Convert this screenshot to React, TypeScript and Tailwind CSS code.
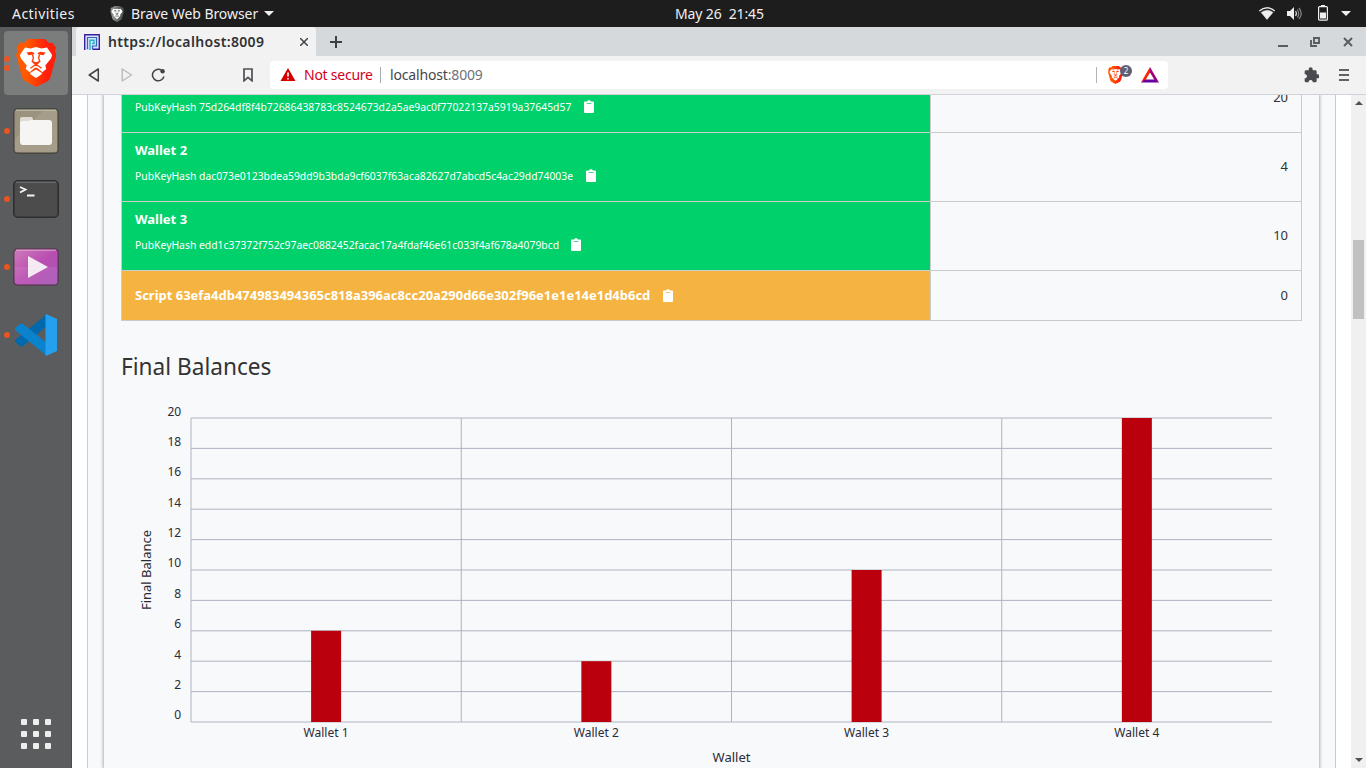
import React from "react";

const rows = [
  { name: "", hash: "75d264df8f4b72686438783c8524673d2a5ae9ac0f77022137a5919a37645d57", value: 20 },
  { name: "Wallet 2", hash: "dac073e0123bdea59dd9b3bda9cf6037f63aca82627d7abcd5c4ac29dd74003e", value: 4 },
  { name: "Wallet 3", hash: "edd1c37372f752c97aec0882452facac17a4fdaf46e61c033f4af678a4079bcd", value: 10 },
];

const bars = [6, 4, 10, 20];
const ticks = [0, 2, 4, 6, 8, 10, 12, 14, 16, 18, 20];

function Clipboard() {
  return (
    <svg width="10" height="14" viewBox="0 0 10 14" className="shrink-0">
      <path fill="#fff" fillRule="evenodd" d="M1 1.6h2.2C3.4.7 4.1.2 5 .2s1.600.5 1.800 1.400H9a1 1 0 0 1 1 1V12a1 1 0 0 1-1 1H1a1 1 0 0 1-1-1V2.600a1 1 0 0 1 1-1zM2.600 2.900v.9h4.800v-.9z" />
    </svg>
  );
}

function Lion({ id, grey }: { id: string; grey?: boolean }) {
  const a = grey ? "#8a8d8e" : "#ff5a00";
  const b = grey ? "#55585a" : "#ff1f0a";
  const line = grey ? "#55585a" : "#ff3a06";
  return (
    <svg viewBox="0 0 40 48" className="h-full w-full">
      <defs>
        <linearGradient id={id} x1="0" x2="1">
          <stop offset="0.25" stopColor={a} />
          <stop offset="0.75" stopColor={b} />
        </linearGradient>
      </defs>
      <path fill={`url(#${id})`} d="M12 0h17l4 4 3.500-.3 3.500 5-1 3.500 1.500 4-6 22q-.7 2.500-3 4L20 48 9 42q-2.300-1.500-3-4L0 16l1.500-4-1-3.500L4 3.500 8 4z" />
      <path fill="#fff" d="M9 8.500 14.500 9.500l5.500-1.500 5.500 1.500 5.500-1 5.200 7.500-1.200 3.500-5.700 7 1 3.500-4 3.200-4.500-4-1.800-.7-1.800.7-4.500 4-4-3.200 1-3.500-5.700-7L3.800 16zM20 30.500l6.300 3.700-2 2L20 39l-4.300-2.800-2-2z" />
      <path fill={line} d="m10.500 13.500 5-.7 3 1.200-.7 1.200-3.300.8-2 .2zM29.500 13.500l-5-.7-3 1.200.7 1.200 3.300.8 2 .2z" />
      <path fill="none" stroke={line} strokeWidth="1.300" d="m16.500 15.500.9 3.500-1.200 3.500 3.800 2.800 3.800-2.800-1.200-3.500.9-3.500M20 25.300l-5.500 4M20 25.300l5.500 4" />
      <path fill={line} d="m16.500 22 3.500 1.200 3.500-1.200-1 2.500-2.500 1.700-2.500-1.700z" />
    </svg>
  );
}

function TopBar() {
  return (
    <header className="flex h-[27px] shrink-0 items-center bg-[#1d1d1d] text-[14px] leading-[27px] text-[#efefef]">
      <span className="ml-3 w-[98px] tracking-[0.45px]">Activities</span>
      <span className="h-4 w-[14px]"><Lion id="menu-lion" grey /></span>
      <span className="ml-[7px] w-[129px] whitespace-nowrap tracking-[-0.06px]">Brave Web Browser</span>
      <svg width="10" height="6" className="ml-1"><path d="M0 0h10L5 5z" fill="#efefef" /></svg>
      <span className="ml-[401px] whitespace-pre tracking-[-0.12px]">May 26  21:45</span>
      <div className="mr-[15px] ml-auto flex items-center">
        <svg width="16" height="13" viewBox="0 0 16 13" className="mr-px">
          <path fill="#8b8b8b" d="M0 3.500Q8-3 16 3.500L8 13z" />
          <path fill="#efefef" d="M0 3.500Q8-3 16 3.500l-1 1.200Q8-.8 1 4.700zM2.200 5.500Q8 1.500 13.800 5.500L8 12.500z" />
          <path fill="none" stroke="#1d1d1d" strokeWidth="1.200" d="M1 4.900Q8-.5 15 4.900" />
        </svg>
        <svg width="15" height="13" viewBox="0 0 15 13" className="ml-[11px]">
          <path fill="#efefef" d="M0 4h3l4-4v13l-4-4H0z" />
          <path fill="none" stroke="#d5d5d5" strokeWidth="1.200" d="M8.500 4q2 2.500 0 5" />
          <path fill="none" stroke="#858585" strokeWidth="1.200" d="M10.300 2.500q3 4 0 8M12 1q4.500 5.500 0 11" />
        </svg>
        <svg width="10" height="16" viewBox="0 0 10 16" className="mb-[2px] ml-4">
          <path fill="#efefef" d="M3 0h4v2H3z" />
          <rect x=".6" y="1.600" width="8.800" height="13.600" rx="1" fill="none" stroke="#efefef" strokeWidth="1.200" />
          <path fill="#efefef" d="M2 7.500h6v6H2z" />
        </svg>
        <svg width="10" height="6" className="ml-[13px]"><path d="M0 0h10L5 5z" fill="#efefef" /></svg>
      </div>
    </header>
  );
}

function Dot() {
  return <i className="h-[6px] w-[6px] rounded-full bg-[#e95420]" />;
}

function DockItem({ children }: { children: React.ReactNode }) {
  return (
    <div className="flex h-[68px] items-center">
      <span className="ml-1 flex w-[9px]"><Dot /></span>
      {children}
    </div>
  );
}

function Dock() {
  return (
    <aside className="flex w-[72px] shrink-0 flex-col border-r border-[#4a4b4c] bg-[#5b5c5d]">
      <div className="mt-1 ml-1 flex h-16 w-16 shrink-0 items-center rounded-[4px] bg-[#7b7c7c]">
        <span className="flex w-3 flex-col gap-[3px]"><Dot /><Dot /></span>
        <span className="h-12 w-10"><Lion id="dock-lion" /></span>
      </div>
      <div className="mt-[2px]">
        <DockItem>
          <svg width="46" height="46" viewBox="0 0 46 46">
            <rect x=".8" y=".8" width="44.400" height="44.400" rx="4" fill="#9b937e" stroke="#494840" strokeWidth="1.500" />
            <path d="M2 31 31 2h11q2 0 2 2v38q0 2-2 2H4q-2 0-2-2z" fill="#a59d89" />
            <path d="M3 2.200h40" stroke="#c8c3b5" />
            <path d="M7 17v-6q0-2 2-2h9q2 0 2 3z" fill="#dedbd0" />
            <path d="M7 16q0-3 3-3h5l3-1h18q3 0 3 3v19q0 3-3 3H10q-3 0-3-3z" fill="#f6f5f3" />
          </svg>
        </DockItem>
        <DockItem>
          <svg width="46" height="38" viewBox="0 0 46 38">
            <rect x=".8" y=".8" width="44.400" height="36.400" rx="4" fill="#4c4c4c" stroke="#2e2e2e" strokeWidth="1.600" />
            <path d="M3 2.200h40" stroke="#777" />
            <path d="m7 7 5.500 2.500L7 12.500M14 15.500h7.500" fill="none" stroke="#f5f5f5" strokeWidth="1.800" />
          </svg>
        </DockItem>
        <DockItem>
          <svg width="46" height="38" viewBox="0 0 46 38">
            <defs>
              <linearGradient id="video" x2="1" y2="1"><stop stopColor="#cf7cb9" /><stop offset=".5" stopColor="#b94eb2" /><stop offset="1" stopColor="#a255b4" /></linearGradient>
            </defs>
            <rect x=".8" y=".8" width="44.400" height="36.400" rx="4" fill="url(#video)" stroke="#55384f" strokeWidth="1.300" />
            <path d="M2 19h42v17H2z" fill="#fff" opacity=".08" />
            <path d="M3 2.200h40" stroke="#dfa8d2" />
            <path d="M15 8v22l20-11z" fill="#f5e9f4" />
          </svg>
        </DockItem>
        <DockItem>
          <svg width="44" height="44" viewBox="0 0 44 44" className="ml-px">
            <path fill="#0069ad" d="m1 29 5 4q1.500 1 3 0L33 13V1L1 27z" />
            <path fill="#0a82cc" d="M1 15v2l32 26V30L9 11q-1.500-1-3 0z" />
            <path fill="#24a0ef" d="m32 1 11 5v32l-11 5q-1-1-.5-2V3q-.5-1 .5-2z" />
          </svg>
        </DockItem>
      </div>
      <div className="mt-auto mb-[19px] ml-[21px] grid w-[30px] grid-cols-3 gap-[6px]">
        {[0, 1, 2, 3, 4, 5, 6, 7, 8].map((n) => <i key={n} className="h-[6px] w-[6px] rounded-[1px] bg-[#eeeeec]" />)}
      </div>
    </aside>
  );
}

function TabStrip() {
  return (
    <div className="flex h-[29px] shrink-0 items-center bg-[#d5d9dc]">
      <div className="ml-1 flex h-full w-[240px] items-center rounded-t-[4px] bg-[#f2f2f2]">
        <svg width="16" height="16" viewBox="0 0 16 16" className="ml-2">
          <path fill="#d9e4fa" d="M0 0h16v16H0z" />
          <path fill="none" stroke="#3a1fa0" strokeWidth="1.400" d="M.7 16V.7h14.600v14.600H8.500" />
          <path fill="none" stroke="#3565b8" strokeWidth="1.200" d="M3.500 15.300V3.500h9v8.500H8.500v3" />
          <path fill="none" stroke="#20b4c8" strokeWidth="1.400" d="M6 16V6.200h4v3.300H8" />
        </svg>
        <span className="ml-2 w-[190px] text-[14px] font-semibold tracking-[0.34px] whitespace-nowrap text-[#303236]">https://localhost:8009</span>
        <svg width="8" height="8" className="ml-[2px] shrink-0"><path d="m0 0 8 8M8 0 0 8" stroke="#414447" strokeWidth="1.500" /></svg>
      </div>
      <svg width="12" height="12" className="ml-[14px]"><path d="M6 0v12M0 6h12" stroke="#3e4144" strokeWidth="2" /></svg>
      <div className="mr-[13px] ml-auto flex items-center">
        <svg width="10" height="10" className="mr-[22px]"><path d="M0 9h10" stroke="#5a5c62" strokeWidth="2" /></svg>
        <svg width="10" height="10" className="mr-[23px]"><path d="M4 1h5v5H4zM1 3v6h6" fill="none" stroke="#5a5c62" strokeWidth="1.900" /></svg>
        <svg width="10" height="10"><path d="m1 1 8 8M9 1 1 9" stroke="#5a5c62" strokeWidth="2" /></svg>
      </div>
    </div>
  );
}

function Toolbar() {
  return (
    <div className="flex h-[39px] shrink-0 items-center border-b border-[#d0d4da] bg-[#f2f2f2]">
      <svg width="12" height="14" className="ml-4"><path d="M10.300 1v12L1.200 7z" fill="none" stroke="#424447" strokeWidth="1.500" strokeLinejoin="round" /></svg>
      <svg width="12" height="14" className="ml-[21px]"><path d="M1.200 1v12l9.300-6z" fill="none" stroke="#bababa" strokeWidth="1.400" strokeLinejoin="round" /></svg>
      <svg width="15" height="14" viewBox="0 0 15 14" className="ml-[18px]">
        <path d="M10.500 2.200A5.800 5.800 0 1 0 12.900 8.500" fill="none" stroke="#424447" strokeWidth="1.500" />
        <circle cx="11.600" cy="3.200" r="2.200" fill="#424447" />
      </svg>
      <svg width="10" height="14" className="ml-[77px]"><path d="M1 1h8v11.800L5 9.300l-4 3.500z" fill="none" stroke="#4d4f52" strokeWidth="1.700" /></svg>
      <div className="ml-[17px] flex h-7 w-[898px] items-center rounded-[4px] bg-white text-[14px]">
        <svg width="16" height="13" viewBox="0 0 16 13" className="mb-px ml-[10px]"><path d="m8 0 7.500 13H.5z" fill="#d40000" /><path d="M8 4.500v4M8 10v1.500" stroke="#fff" strokeWidth="1.600" /></svg>
        <span className="mb-[2px] ml-2 w-[69px] tracking-[-0.25px] whitespace-nowrap text-[#d3001c]">Not secure</span>
        <i className="ml-[7px] h-4 w-px bg-[#a8abb0]" />
        <span className="mb-[2px] ml-[9px] tracking-[-0.16px] text-[#44464a]">localhost<span className="text-[#707276]">:8009</span></span>
        <i className="ml-auto h-4 w-px bg-[#b0b3b8]" />
        <div className="relative ml-[11px] h-[18px] w-[15px]">
          <Lion id="shield-lion" />
          <span className="absolute -top-[1px] left-3 flex h-3 w-3 items-center justify-center rounded-full bg-[#5f6075] text-[8px] leading-none text-white">2</span>
        </div>
        <svg width="18" height="16" viewBox="0 0 18 16" className="mr-[9px] ml-[18px]">
          <path d="M9 0 0 15.500 4.500 13 9 5.500z" fill="#ff2000" />
          <path d="m9 0 9 15.500L13.500 13 9 5.500z" fill="#a3007b" />
          <path d="M0 15.500h18L14 12.500H4z" fill="#66009f" />
        </svg>
      </div>
      <svg width="16" height="16" viewBox="0 0 24 24" className="mr-5 ml-auto">
        <path fill="#484a4d" d="M22 11h-1.500V7q0-2-2-2h-4V3.500a3 3 0 0 0-6 0V5h-4q-2 0-2 2v4H4a3.300 3.300 0 0 1 0 6H2.500v4q0 2 2 2h4v-1.500a3.300 3.300 0 0 1 6 0V23h4q2 0 2-2v-4H22a3 3 0 0 0 0-6z" />
      </svg>
      <svg width="10" height="12" className="mr-[17px]"><path d="M0 1h10M0 6h10M0 11h10" stroke="#606266" strokeWidth="2" /></svg>
    </div>
  );
}

function Balances() {
  return (
    <div className="-mt-[32px] flex h-[258px] w-[1181px] shrink-0 flex-col border border-[#c9cbcf] text-[13px]">
      {rows.map((r) => (
        <div key={r.hash} className="flex h-[69px] shrink-0 border-b border-[#c9cbcf]">
          <div className="w-[809px] border-r border-[#c9cbcf] bg-[#01d16a] pl-[13px] text-white">
            <div className="mt-[7px] h-5 leading-5 font-bold">{r.name}</div>
            <div className="mt-[6px] flex h-5 items-center text-[11px]">
              <span className="inline-block origin-left scale-x-[0.943] whitespace-nowrap text-white">PubKeyHash {r.hash}</span>
              <span className="-ml-[14px] flex"><Clipboard /></span>
            </div>
          </div>
          <div className="flex flex-1 items-center justify-end pr-[13px] text-[#333]">{r.value}</div>
        </div>
      ))}
      <div className="flex flex-1">
        <div className="flex w-[809px] items-center border-r border-[#c9cbcf] bg-[#f5b442] pl-[13px] font-bold text-white">
          <span className="tracking-[-0.014px] whitespace-nowrap">Script 63efa4db474983494365c818a396ac8cc20a290d66e302f96e1e1e14e1d4b6cd</span>
          <span className="ml-[13px] flex"><Clipboard /></span>
        </div>
        <div className="flex flex-1 items-center justify-end pr-[13px] text-[#333]">0</div>
      </div>
    </div>
  );
}

function Chart() {
  return (
    <svg width="1181" height="380" viewBox="121 390 1181 380" className="shrink-0 text-[12px]" fill="#2b2b35">
      <g stroke="#aeb3c0" strokeWidth="1">
        {ticks.map((t) => <path key={t} d={`M191 ${722 - t * 15.2}H1272`} />)}
        {[0, 1, 2, 3].map((n) => <path key={n} d={`M${191 + n * 270.25} 418V722`} />)}
      </g>
      {ticks.map((t) => <text key={t} x="181.200" y={719.3 - t * 15.19} textAnchor="end">{t}</text>)}
      {bars.map((v, n) => (
        <g key={n}>
          <rect x={311.1 + n * 270.25} y={722 - v * 15.2} width="30" height={v * 15.2} fill="#b9000c" />
          <text x={326.1 + n * 270.25} y="737" textAnchor="middle">Wallet {n + 1}</text>
        </g>
      ))}
      <text x="731.500" y="762" textAnchor="middle" className="text-[13px]">Wallet</text>
      <text transform="translate(151 570) rotate(-90)" textAnchor="middle" className="text-[13px]">Final Balance</text>
    </svg>
  );
}

export default function App() {
  return (
    <div className="flex h-[768px] w-[1366px] flex-col overflow-hidden bg-white font-['Noto_Sans',sans-serif]">
      <TopBar />
      <div className="flex min-h-0 flex-1">
        <Dock />
        <div className="flex min-w-0 flex-1 flex-col">
          <TabStrip />
          <Toolbar />
          <main className="flex min-h-0 flex-1 overflow-hidden bg-white">
            <div className="ml-[15px] flex w-[1249px] shrink-0 border-x border-[#c9cbcf] bg-[#f8f9fb]">
              <div className="ml-4 flex w-[1215px] shrink-0 flex-col bg-[#f8f9fb] pl-[17px] shadow-[0_0_3px_1px_#aeb0b3]">
                <Balances />
                <h2 className="mt-[28px] h-[34px] w-[300px] shrink-0 origin-left scale-x-[0.943] text-[24px] leading-[34px] text-[#333]">Final Balances</h2>
                <div className="mt-[7px] flex shrink-0"><Chart /></div>
              </div>
            </div>
            <div className="ml-auto flex w-[15px] flex-col items-center bg-[#f0f0f0]">
              <svg width="8" height="5" className="mt-[6px]"><path d="M0 4h8L4 0z" fill="#505050" /></svg>
              <i className="mt-[134px] h-[79px] w-[11px] bg-[#c1c1c1]" />
              <svg width="8" height="5" className="mt-auto mb-[5px]"><path d="M0 0h8L4 4z" fill="#505050" /></svg>
            </div>
          </main>
        </div>
      </div>
    </div>
  );
}
